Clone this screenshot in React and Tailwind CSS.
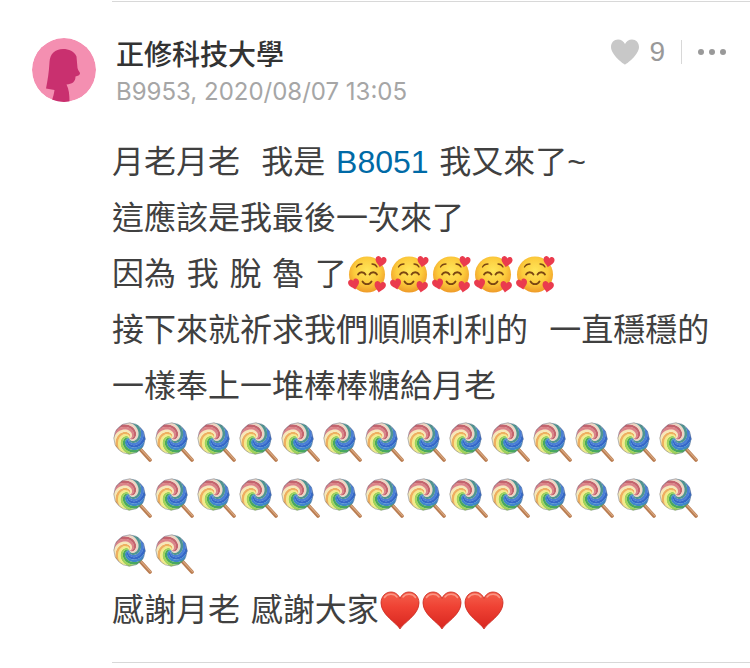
import React from 'react';

// One blade of the candy swirl, from the centre out to the rim
function swirlBlade(start, sweep) {
  const radius = 16;
  const turn = 3;
  const steps = 18;
  const edge = (offset) =>
    Array.from({ length: steps + 1 }, (_, i) => {
      const t = i / steps;
      const angle = offset + turn * (1 - t);
      return `${(16.5 + radius * t * Math.cos(angle)).toFixed(2)} ${(16.5 + radius * t * Math.sin(angle)).toFixed(2)}`;
    });
  return `M${[...edge(start), ...edge(start + sweep).reverse()].join('L')}Z`;
}

// Clockwise, starting in the upper right
const BLADE_COLORS = [
  '#4a7fd6', '#3568c8', '#3f86cc', '#48a860', '#9fd25a', '#f3eb8a',
  '#eeb060', '#f6e8b8', '#dc8488', '#c4646e', '#ecd6c4', '#4f9590',
];
const BLADES = BLADE_COLORS.map((fill, i) => {
  const sweep = (Math.PI * 2) / BLADE_COLORS.length;
  return { fill, d: swirlBlade((i - 2) * sweep, sweep + 0.03) };
});

const HEART = 'M20 39C17 33 1 25 1 13C1 6.500 5.500 2 11 2C15 2 18.500 4.500 20 8.500C21.500 4.500 25 2 29 2C34.500 2 39 6.500 39 13C39 25 23 33 20 39Z';

function Emoji({ label, children }) {
  return (
    <svg viewBox="0 0 40 40" role="img" aria-label={label} className="mx-px inline-block size-10 align-[-9px]">
      {children}
    </svg>
  );
}

function Lollipop() {
  return (
    <Emoji label="棒棒糖">
      <path d="M27 27L37 38" stroke="#b97c50" strokeWidth="3.600" strokeLinecap="round" />
      <path d="M27.500 26.800L37.500 37.600" stroke="#dba982" strokeWidth="1.200" strokeLinecap="round" />
      {BLADES.map((blade) => (
        <path key={blade.d} d={blade.d} fill={blade.fill} />
      ))}
      <circle cx="16.500" cy="16.500" r="15.600" fill="none" stroke="#5f6f88" strokeOpacity="0.5" strokeWidth="0.900" />
    </Emoji>
  );
}

function LoveFace() {
  return (
    <Emoji label="愛心笑臉">
      <circle cx="19" cy="20.500" r="18" fill="url(#face)" />
      <g fill="none" stroke="#7a4612" strokeLinecap="round">
        <path d="M10 20.500C11.500 17.500 16 17.500 17.500 20.500M21.500 20.500C23 17.500 27.500 17.500 29 20.500M14.500 27.500C16.500 31 21.500 31 23.500 27.500" strokeWidth="1.800" />
        <path d="M8.500 13C9.500 11 11.500 10 14 10M24 10C26 10 28 11 29 13" strokeWidth="1.300" />
      </g>
      <path d={HEART} fill="#ea3b4e" transform="translate(28 1) rotate(10) scale(.29)" />
      <path d={HEART} fill="#ea3b4e" transform="translate(-1 26) rotate(-14) scale(.29)" />
      <path d={HEART} fill="#ea3b4e" transform="translate(27 26) rotate(10) scale(.3)" />
    </Emoji>
  );
}

function RedHeart() {
  return (
    <Emoji label="愛心">
      <path d={HEART} fill="url(#heart)" stroke="#c92a20" strokeWidth="0.800" />
      <path d="M4.500 7.500C7 3.500 14 3 17 7M23 7C26 3 33 3.500 35.500 7.500" fill="none" stroke="#ffb0a0" strokeOpacity="0.7" strokeWidth="1.500" strokeLinecap="round" />
    </Emoji>
  );
}

function Repeat({ count, of: Item }) {
  return Array.from({ length: count }, (_, i) => <Item key={i} />);
}

function Gradients() {
  return (
    <svg className="absolute size-0" aria-hidden="true">
      <defs>
        <radialGradient id="face" cx="0.5" cy="0.4" r="0.6">
          <stop offset="0" stopColor="#ffe65a" />
          <stop offset="0.6" stopColor="#fccb3c" />
          <stop offset="1" stopColor="#ef9a28" />
        </radialGradient>
        <linearGradient id="heart" x1="0" y1="0" x2="0" y2="1">
          <stop offset="0" stopColor="#f4604c" />
          <stop offset="0.4" stopColor="#ef4234" />
          <stop offset="1" stopColor="#d8261f" />
        </linearGradient>
      </defs>
    </svg>
  );
}

function Avatar() {
  return (
    <svg viewBox="0 0 64 64" className="size-16 shrink-0 rounded-full" aria-hidden="true">
      <circle cx="32" cy="32" r="32" fill="#f48fb1" />
      <path
        d="M31 11C23 11 18 16 17.500 24C17 34 15.500 43 14 50.500L22.500 52C22 56 21 59 19.500 64H37.500C37.500 57 37 51 34.500 46.500C40 46 43.500 44 43.500 38.500C45.500 38 48 37 48 35.500C48 34 46 32.500 45.500 30L44.500 18.500C42 13 37 11 31 11Z"
        fill="#c9306f"
      />
    </svg>
  );
}

export default function App() {
  return (
    <main className="min-h-screen bg-white pt-px font-['Liberation_Sans','Noto_Sans_CJK_TC',sans-serif]">
      <Gradients />
      <article>
        <hr className="ml-28 border-[#d8d8d8]" />

        {/* Header */}
        <header className="mt-9 flex items-start px-8">
          <Avatar />
          <div className="ml-5 flex-1 pt-0.5">
            <h2 className="text-[28px] leading-8 font-medium text-[#333333]">正修科技大學</h2>
            <p className="mt-1 font-['Inter',sans-serif] text-2xl leading-8 text-[#a6a6a6]">B9953, 2020/08/07 13:05</p>
          </div>
          <div className="-mr-2 flex h-7 items-center">
            <button type="button" aria-label="喜歡" className="flex items-center gap-2.5 text-[28px] text-[#999999]">
              <svg viewBox="0 0 28 26" className="h-[26px] w-7" aria-hidden="true">
                <path d="M14 25.500C13 25.500 0 16 0 8C0 3.500 3 .5 7 .5C10 .5 12.800 2.500 14 5C15.200 2.500 18 .5 21 .5C25 .5 28 3.500 28 8C28 16 15 25.500 14 25.500Z" fill="#c8c8c8" />
              </svg>
              9
            </button>
            <span className="mx-4 h-6 w-px bg-[#d8d8d8]" />
            <button type="button" aria-label="更多">
              <svg viewBox="0 0 28 8" className="h-2 w-7" fill="#999999" aria-hidden="true">
                <circle cx="3" cy="4" r="3" />
                <circle cx="14" cy="4" r="3" />
                <circle cx="25" cy="4" r="3" />
              </svg>
            </button>
          </div>
        </header>

        {/* Post body, three-per-em spaces between the words */}
        <div className="mt-[26px] mr-8 ml-28 text-[32px] leading-[56px] whitespace-pre-wrap text-[#404040]">
          <p>月老月老{'\u2004\u2004'}我是{'\u2004'}<a href="#B8051" className="text-[#006aa6]">B8051</a>{'\u2004'}我又來了~</p>
          <p>這應該是我最後一次來了</p>
          <p>因為{'\u2004'}我{'\u2004'}脫{'\u2004'}魯{'\u2004'}了<Repeat count={5} of={LoveFace} /></p>
          <p>接下來就祈求我們順順利利的{'\u2004\u2004'}一直穩穩的</p>
          <p>一樣奉上一堆棒棒糖給月老</p>
          <p><Repeat count={30} of={Lollipop} /></p>
          <p>感謝月老{'\u2004'}感謝大家<Repeat count={3} of={RedHeart} /></p>
        </div>

        <hr className="mt-6 ml-28 border-[#d8d8d8]" />
      </article>
    </main>
  );
}
